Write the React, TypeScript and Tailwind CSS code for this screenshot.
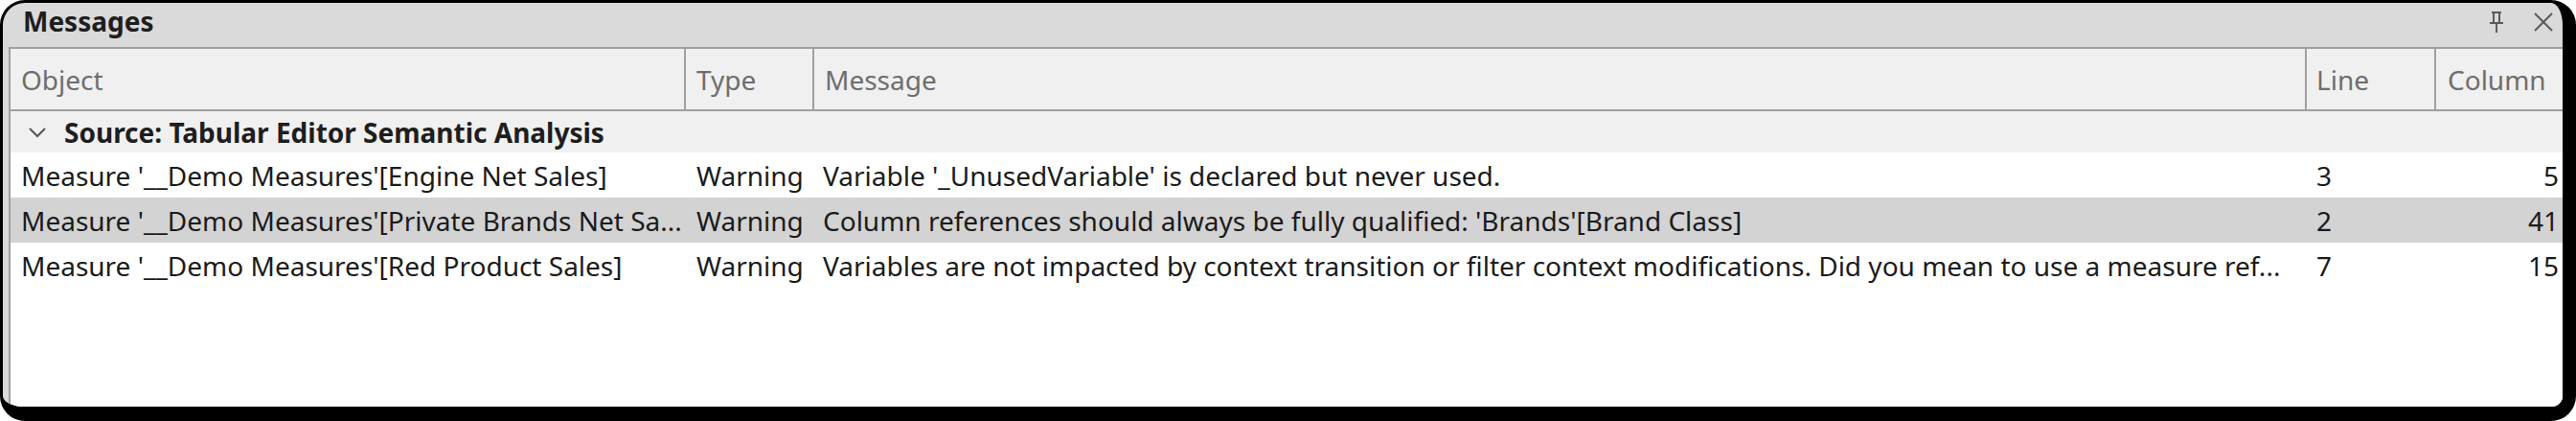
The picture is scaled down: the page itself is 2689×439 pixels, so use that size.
import React from "react";

const rows = [
  {
    obj: "Measure '__Demo Measures'[Engine Net Sales]",
    type: "Warning",
    msg: "Variable '_UnusedVariable' is declared but never used.",
    line: "3",
    col: "5",
    sel: false,
  },
  {
    obj: "Measure '__Demo Measures'[Private Brands Net Sa...",
    type: "Warning",
    msg: "Column references should always be fully qualified: 'Brands'[Brand Class]",
    line: "2",
    col: "41",
    sel: true,
  },
  {
    obj: "Measure '__Demo Measures'[Red Product Sales]",
    type: "Warning",
    msg: "Variables are not impacted by context transition or filter context modifications. Did you mean to use a measure ref...",
    line: "7",
    col: "15",
    sel: false,
  },
];

function PinIcon() {
  return (
    <svg width="20" height="24" viewBox="0 0 20 24" fill="none" stroke="#5a5a5a" strokeWidth="2">
      <path d="M5 2 H15" />
      <path d="M7 2 V12 M13 2 V12" />
      <path d="M3 13 H17" />
      <path d="M10 13 V23" />
    </svg>
  );
}

function CloseIcon() {
  return (
    <svg width="22" height="22" viewBox="0 0 22 22" fill="none" stroke="#5a5a5a" strokeWidth="2">
      <path d="M2 2 L20 20 M20 2 L2 20" />
    </svg>
  );
}

function Chevron() {
  return (
    <svg width="20" height="12" viewBox="0 0 20 12" fill="none" stroke="#555" strokeWidth="2">
      <path d="M2 2 L10 10 L18 2" />
    </svg>
  );
}

export default function App() {
  return (
    <div className="w-[2689px] h-[439px] bg-white font-['Segoe_UI','Noto_Sans',sans-serif]">
      <div className="w-full h-full rounded-[26px] border-black border-t-[3px] border-l-[3px] border-r-[14px] border-b-[15px] bg-[#dadada] overflow-hidden flex flex-col">
        <div className="h-[46px] shrink-0 flex items-center pl-[21px] pr-[9px]">
          <span className="text-[28px] font-bold text-[#1e1e1e] leading-none -mt-[8px]">Messages</span>
          <div className="ml-auto flex items-center gap-[28px] -mt-[6px]">
            <PinIcon />
            <CloseIcon />
          </div>
        </div>
        <div className="flex-1 ml-[6px] border-l-2 border-t-2 border-[#a0a0a0] bg-white flex flex-col text-[28px] leading-[40px] overflow-hidden">
          <div className="h-[65px] shrink-0 flex bg-[#f0f0f0] border-b-2 border-[#a0a0a0] text-[#6e6e6e]">
            <div className="w-[705px] shrink-0 border-r-2 border-[#a0a0a0] pl-[11px] flex items-center">Object</div>
            <div className="w-[134px] shrink-0 border-r-2 border-[#a0a0a0] pl-[11px] flex items-center">Type</div>
            <div className="w-[1558px] shrink-0 border-r-2 border-[#a0a0a0] pl-[11px] flex items-center">Message</div>
            <div className="w-[135px] shrink-0 border-r-2 border-[#a0a0a0] pl-[10px] flex items-center">Line</div>
            <div className="flex-1 pl-[12px] flex items-center">Column</div>
          </div>
          <div className="h-[43px] shrink-0 flex items-center bg-[#f0f0f0] pl-[18px]">
            <Chevron />
            <span className="ml-[18px] font-bold text-[#1e1e1e]">Source: Tabular Editor Semantic Analysis</span>
          </div>
          {rows.map((r, i) => (
            <div
              key={i}
              className={`h-[47px] shrink-0 flex items-center text-[#1b1b1b] ${r.sel ? "bg-[#d3d3d3]" : "bg-white"}`}
            >
              <div className="w-[705px] shrink-0 pl-[11px] whitespace-nowrap overflow-hidden">{r.obj}</div>
              <div className="w-[134px] shrink-0 pl-[11px] whitespace-nowrap overflow-hidden">{r.type}</div>
              <div className="w-[1558px] shrink-0 pl-[9px] whitespace-nowrap overflow-hidden">{r.msg}</div>
              <div className="w-[135px] shrink-0 pl-[10px] whitespace-nowrap overflow-hidden">{r.line}</div>
              <div className="flex-1 pr-[4px] text-right whitespace-nowrap overflow-hidden">{r.col}</div>
            </div>
          ))}
          <div className="flex-1 bg-white" />
        </div>
      </div>
    </div>
  );
}
